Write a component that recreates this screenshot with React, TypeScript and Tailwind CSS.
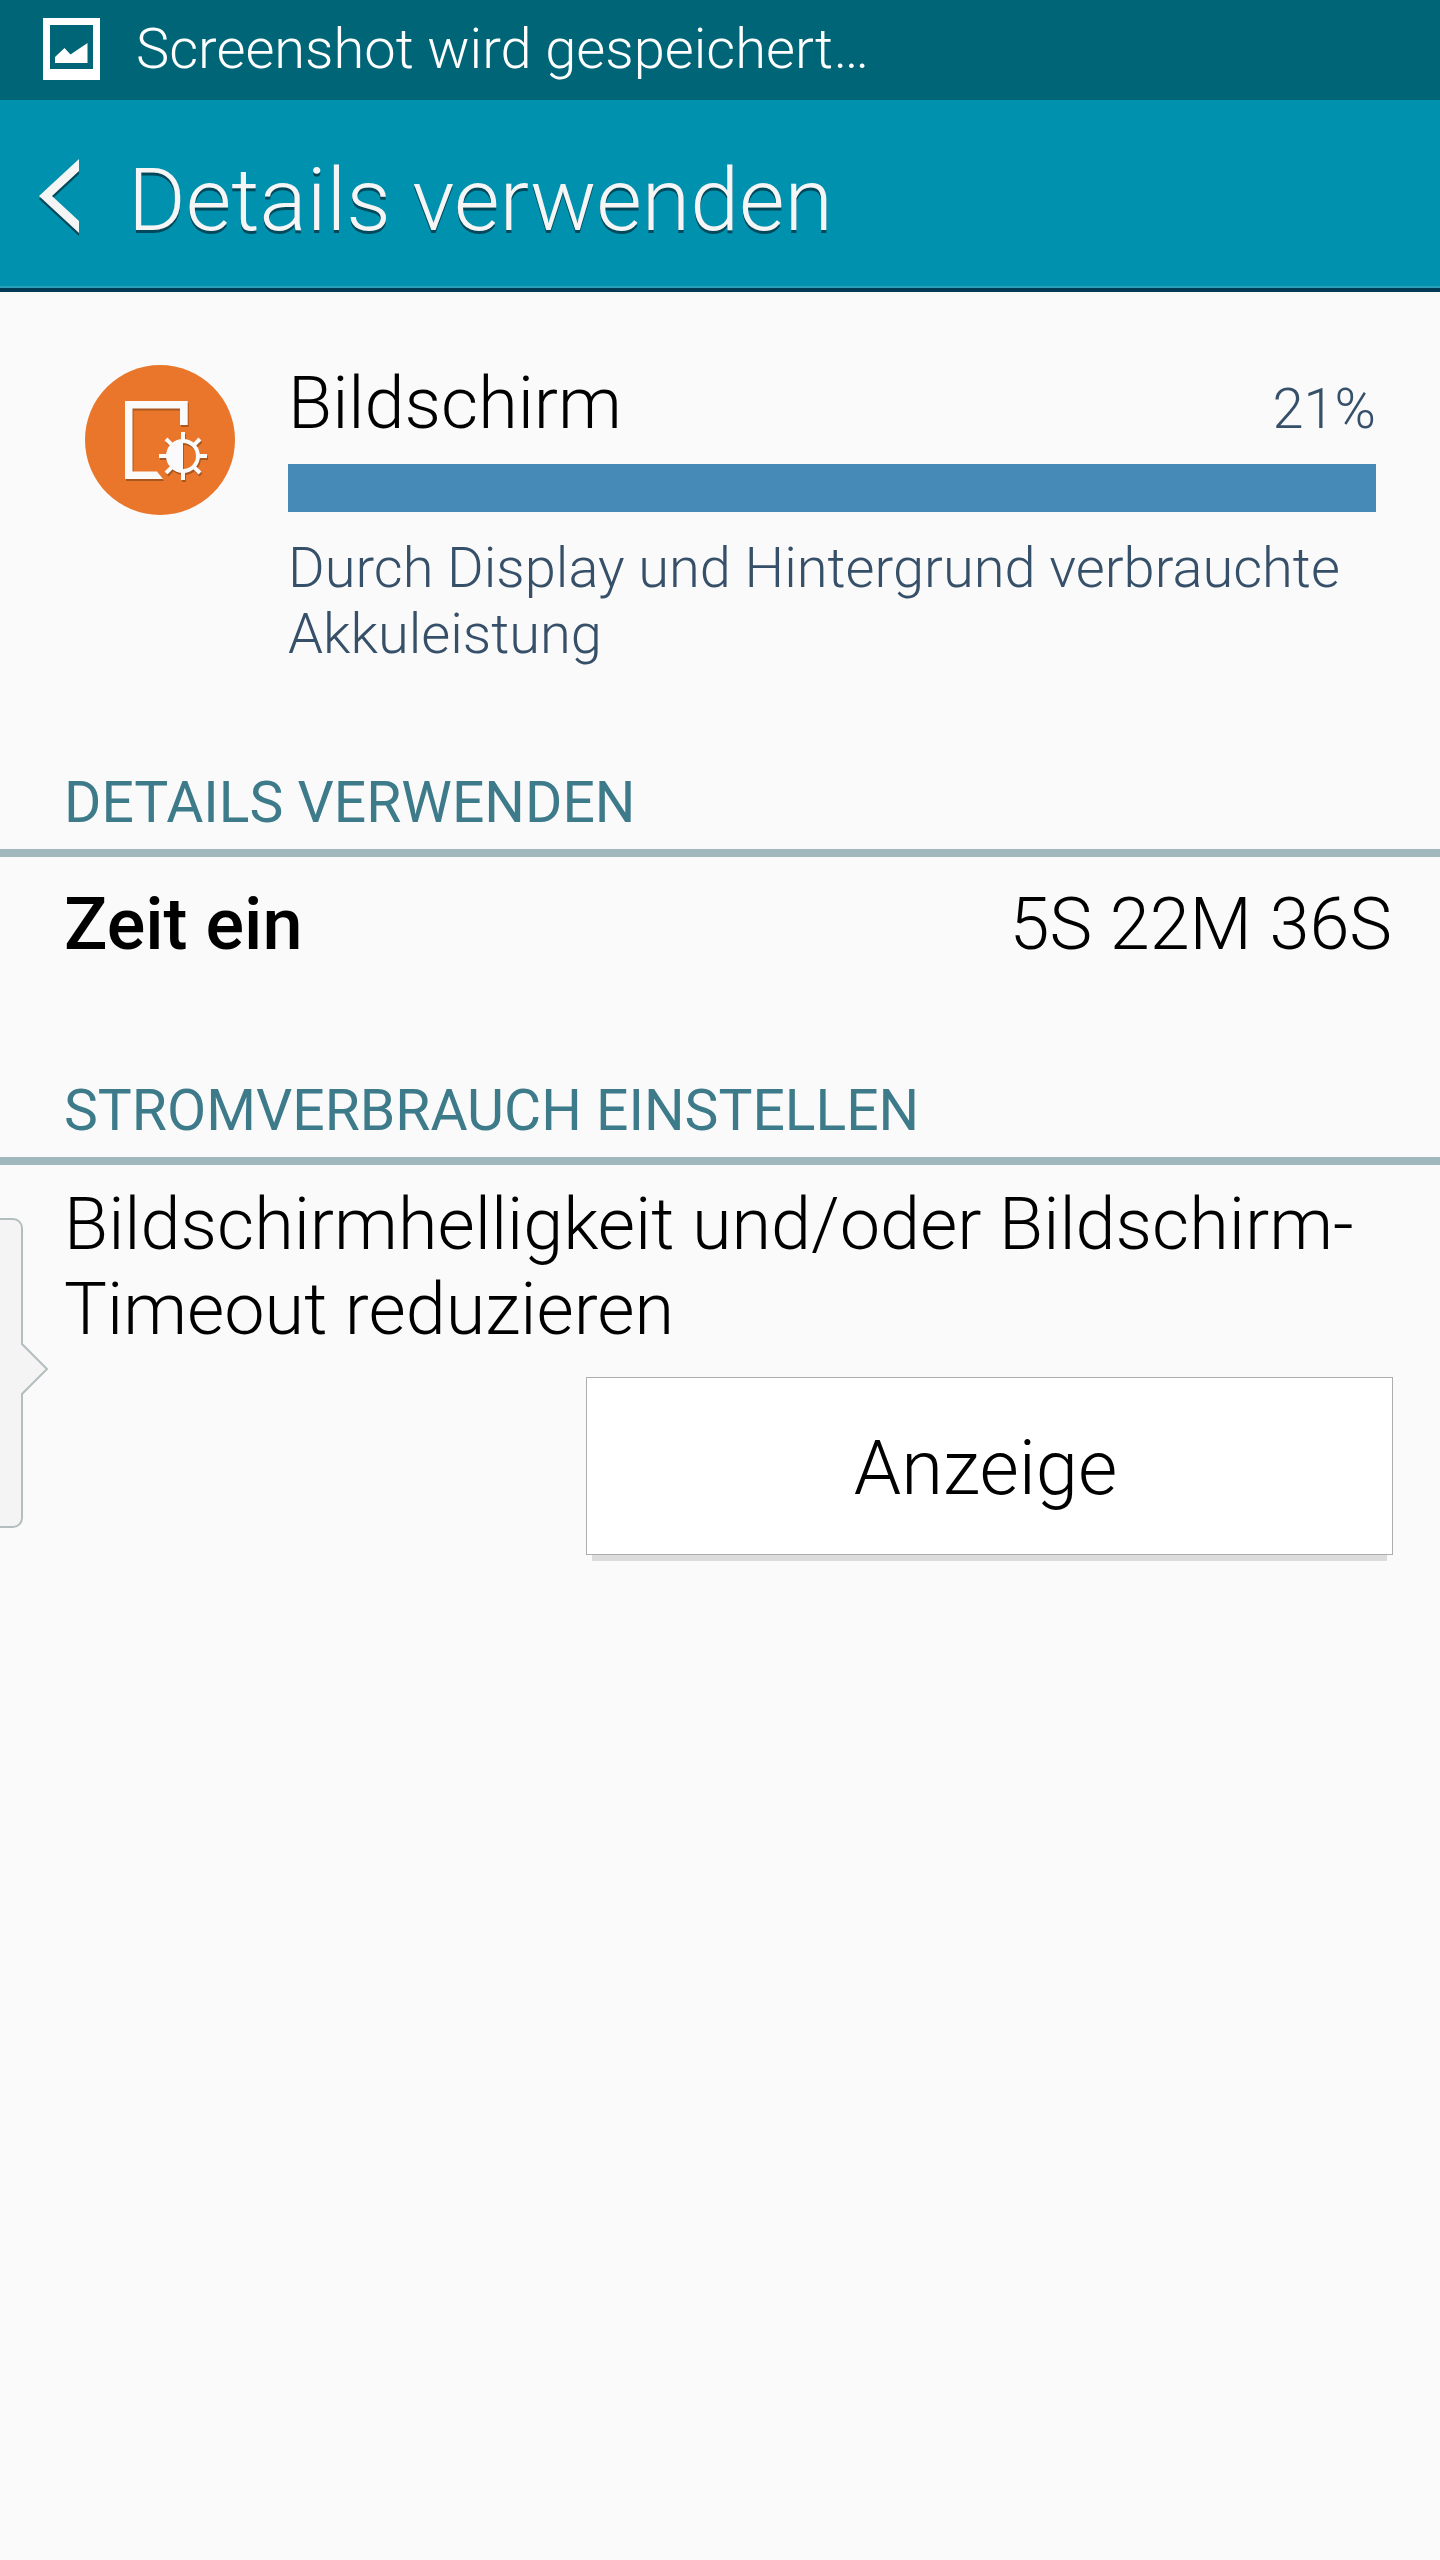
import React from "react";

interface SectionProps {
  title: string;
  children: React.ReactNode;
}

const rays = [0, 45, 90, 135, 180, 225, 270, 315];

const PictureIcon = () => (
  <svg width="57" height="62" viewBox="0 0 57 62" aria-hidden="true">
    <path
      fill="#fff"
      fillRule="evenodd"
      d="M0 0H57V62H0ZM7 7V51H50V7Z"
    />
    <path fill="#fff" d="M12 45V39L21.5 30L27.500 36.500L44.500 25V45Z" />
  </svg>
);

const BackIcon = () => (
  <svg width="41" height="78" viewBox="0 0 41 78" aria-hidden="true">
    <path fill="#00485a" d="M40 3V15L13 40L40 65V77L0 40Z" />
    <path fill="#f5f5f5" d="M40 0V12L13 37L40 62V74L0 37Z" />
  </svg>
);

const DisplayGlyph = () => (
  <>
    <path d="M40 36H102.700V60H95V43.500H47.500V106.500H72L78 114H40Z" />
    <path
      fillRule="evenodd"
      d="M98 74A17 17 0 0 1 98 108A17 17 0 0 1 98 74ZM98 78V104A13 13 0 0 0 98 78Z"
    />
    {rays.map((angle) => (
      <rect
        key={angle}
        x="96"
        y="67"
        width="4"
        height="9"
        transform={`rotate(${angle} 98 91)`}
      />
    ))}
  </>
);

const DisplayIcon = () => (
  <svg
    className="shrink-0"
    width="150"
    height="150"
    viewBox="0 0 150 150"
    aria-hidden="true"
  >
    <circle cx="75" cy="75" r="75" fill="#e9762b" />
    <g fill="#a9561f" transform="translate(1 2)">
      <DisplayGlyph />
    </g>
    <g fill="#fafafa">
      <DisplayGlyph />
    </g>
  </svg>
);

const Section = ({ title, children }: SectionProps) => (
  <section>
    <h2 className="border-b-8 border-[#a0b8bd] px-16 pb-[13px] text-[57px] leading-[66px] font-normal text-[#3e7b8a] uppercase">
      {title}
    </h2>
    {children}
  </section>
);

const App = () => {
  return (
    <div className="relative min-h-screen w-full bg-[#fafafa] font-[Roboto,sans-serif] font-light text-black">
      <div className="flex h-[100px] items-center gap-9 bg-[#006577] pb-0.5 pl-[43px] text-[56px] leading-[66px] text-white">
        <PictureIcon />
        <p>Screenshot wird gespeichert…</p>
      </div>

      <header className="border-b-4 border-[#003a55] bg-[#0091ae]">
        <div className="flex h-[188px] items-center gap-12 border-b-2 border-[#2a9fb8] pt-3.5 pl-[39px]">
          <button type="button" aria-label="Zurück" className="pb-1">
            <BackIcon />
          </button>
          <h1 className="text-[88px] leading-[104px] text-[#f5f5f5] [text-shadow:0_3px_0_#00485a]">
            Details verwenden
          </h1>
        </div>
      </header>

      <main>
        <div className="flex items-start gap-[53px] pt-[69px] pr-16 pb-[103px] pl-[85px]">
          <div className="pt-1">
            <DisplayIcon />
          </div>
          <div className="flex-1">
            <div className="flex items-baseline justify-between">
              <h2 className="text-[72px] leading-[85px]">Bildschirm</h2>
              <span className="text-[56px] leading-[66px] text-[#375069]">
                21%
              </span>
            </div>
            <div className="mt-[18px] h-12 bg-[#468ab8]" />
            <p className="mt-[23px] text-[56px] leading-[66px] text-[#375069]">
              Durch Display und Hintergrund verbrauchte Akkuleistung
            </p>
          </div>
        </div>

        <Section title="Details verwenden">
          <dl className="flex justify-between pt-[25px] pr-12 pb-[111px] pl-16 text-[72px] leading-[85px]">
            <dt className="font-medium">Zeit ein</dt>
            <dd>5S 22M 36S</dd>
          </dl>
        </Section>

        <Section title="Stromverbrauch einstellen">
          <p className="pt-[17px] pr-12 pl-16 text-[72px] leading-[85px]">
            Bildschirmhelligkeit und/oder Bildschirm-Timeout reduzieren
          </p>
          <div className="flex justify-end pt-[25px] pr-[47px] pl-12">
            <button
              type="button"
              className="h-[178px] w-3/5 border border-[#adadad] bg-white pt-1 pr-2 text-[76px] leading-[89px] shadow-[0_12px_0_-6px_#dcdcdc]"
            >
              Anzeige
            </button>
          </div>
        </Section>
      </main>

      {/* multi window handle on the screen edge */}
      <button
        type="button"
        aria-label="Multi Window öffnen"
        className="absolute top-[1218px] left-0"
      >
        <svg width="50" height="310" viewBox="0 0 50 310" aria-hidden="true">
          <path
            fill="#f4f4f4"
            stroke="#b4bebf"
            strokeWidth="2"
            d="M-2 1H13A9 9 0 0 1 22 10V126L47 151L22 176V300A9 9 0 0 1 13 309H-2"
          />
        </svg>
      </button>
    </div>
  );
};

export default App;
